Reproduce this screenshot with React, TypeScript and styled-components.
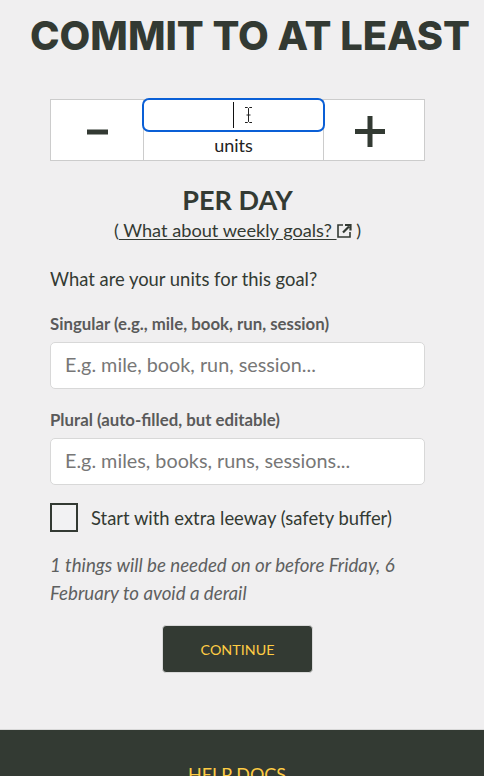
import React from 'react';
import styled, { createGlobalStyle } from 'styled-components';

const bodyFont = `"Lato", "Open Sans", "Liberation Sans", sans-serif`;

const GlobalStyle = createGlobalStyle`
  html, body {
    margin: 0;
    padding: 0;
    height: 776px;
    overflow: hidden;
    background: #f0eff0;
    color: #333a33;
    font-family: ${bodyFont};
  }
  * { box-sizing: border-box; }
`;

const Heading = styled.h1`
  margin: 0;
  padding: 13px 0 0 30px;
  height: 99px;
  font-family: "Inter", "Liberation Sans", sans-serif;
  font-size: 39.8px;
  line-height: 46px;
  font-weight: 800;
  white-space: nowrap;
  color: #333a33;
`;

const Form = styled.div`
  width: 375px;
  margin-left: 50px;
`;

const Stepper = styled.div`
  display: grid;
  grid-template-columns: 92px 181px 1fr;
  height: 62px;
  background: #fff;
  border: 1px solid #ccc;
`;

const MinusButton = styled.div`
  display: flex;
  align-items: center;
  justify-content: center;
  padding-top: 3px;
`;

const PlusButton = styled.div`
  display: flex;
  align-items: center;
  justify-content: center;
  padding: 2px 8px 0 0;
`;

const Middle = styled.div`
  position: relative;
  display: flex;
  flex-direction: column;
  border-left: 1px solid #ccc;
  border-right: 1px solid #ccc;
`;

const ValueBox = styled.div`
  position: relative;
  height: 34px;
  margin: -2px -2px 0 -2px;
  background: #fff;
  border: 2px solid #0a5fd6;
  border-radius: 7px;
`;

const Caret = styled.span`
  position: absolute;
  left: 89px;
  top: 2px;
  width: 1px;
  height: 26px;
  background: #111;
`;

const Pointer = styled.svg`
  position: absolute;
  left: 100px;
  top: 7px;
`;

const UnitText = styled.div`
  flex: 1;
  text-align: center;
  font-size: 18px;
  line-height: 26px;
  color: #222;
`;

const PerDay = styled.div`
  margin-top: 21px;
  text-align: center;
  font-size: 27px;
  line-height: 36px;
  font-weight: 700;
`;

const WeeklyLine = styled.div`
  text-align: center;
  font-size: 18.2px;
  line-height: 24px;
`;

const WeeklyLink = styled.a`
  color: #333a33;
  text-decoration: underline;
  text-underline-offset: 2px;
`;

const Question = styled.p`
  margin: 24px 0 0;
  font-size: 18.4px;
  line-height: 26px;
`;

const FieldLabel = styled.label`
  display: block;
  font-size: 16.8px;
  line-height: 20px;
  font-weight: 700;
  color: #5a5a5a;
`;

const FirstLabel = styled(FieldLabel)`
  margin-top: 22px;
`;

const NextLabel = styled(FieldLabel)`
  margin-top: 21px;
`;

const TextField = styled.input`
  display: block;
  width: 100%;
  height: 47px;
  margin-top: 8px;
  padding: 0 15px 3px 14px;
  background: #fff;
  border: 1px solid #d8d8d8;
  border-radius: 5px;
  font-family: ${bodyFont};
  font-size: 19.8px;
  color: #333;
  &::placeholder {
    color: #777;
    opacity: 1;
  }
`;

const CheckRow = styled.div`
  display: flex;
  align-items: center;
  gap: 13px;
  margin-top: 18px;
  height: 29px;
  font-size: 18.4px;
`;

const CheckBox = styled.span`
  width: 28px;
  height: 29px;
  border: 2px solid #333a33;
  background: #f2f2f3;
`;

const Note = styled.p`
  margin: 19px 0 0;
  font-size: 18.7px;
  line-height: 28px;
  font-style: italic;
  color: #5e6060;
`;

const ContinueButton = styled.button`
  display: block;
  width: 151px;
  height: 48px;
  margin: 18px 0 0 112px;
  background: #333a33;
  border: 1px solid #d8d8d8;
  border-radius: 4px;
  color: #ffcc44;
  font-family: ${bodyFont};
  font-size: 14.3px;
  text-transform: uppercase;
`;

const Footer = styled.footer`
  margin-top: 56px;
  height: 60px;
  background: #333a33;
  border-top: 1px solid #d8d8d8;
  text-align: center;
  padding-top: 33px;
  padding-right: 10px;
  color: #ffcc44;
  font-size: 18px;
  line-height: 22px;
`;

const MinusIcon = () => (
  <svg width="21" height="6" viewBox="0 0 21 6">
    <rect width="21" height="5" y="0.5" fill="#333a33" />
  </svg>
);

const PlusIcon = () => (
  <svg width="30" height="31" viewBox="0 0 30 31">
    <path d="M0 15.500h30M15 0v31" stroke="#333a33" strokeWidth="5" fill="none" />
  </svg>
);

const ExternalIcon = () => (
  <svg width="15" height="15" viewBox="0 0 15 15" style={{ verticalAlign: '-1px' }}>
    <path d="M6 2H1v12h12V9" stroke="#333a33" strokeWidth="1.6" fill="none" />
    <path d="M6 9.500 12 3.500M8 2h5.500v5.500" stroke="#333a33" strokeWidth="2.2" fill="none" />
  </svg>
);

const IBeam = () => (
  <Pointer width="9" height="16" viewBox="0 0 9 16">
    <path d="M1 .5h2.500l1 1 1-1H8M4.500 1.500v13M1 15.500h2.500l1-1 1 1H8M2.500 8h4" stroke="#222" strokeWidth="1" fill="none" />
  </Pointer>
);

export default function App() {
  return (
    <>
      <GlobalStyle />
      <Heading>COMMIT TO AT LEAST</Heading>
      <Form>
        <Stepper>
          <MinusButton>
            <MinusIcon />
          </MinusButton>
          <Middle>
            <ValueBox>
              <Caret />
              <IBeam />
            </ValueBox>
            <UnitText>units</UnitText>
          </Middle>
          <PlusButton>
            <PlusIcon />
          </PlusButton>
        </Stepper>
        <PerDay>PER DAY</PerDay>
        <WeeklyLine>
          (<WeeklyLink href="#"> What about weekly goals? <ExternalIcon /></WeeklyLink> )
        </WeeklyLine>
        <Question>What are your units for this goal?</Question>
        <FirstLabel>Singular (e.g., mile, book, run, session)</FirstLabel>
        <TextField placeholder="E.g. mile, book, run, session..." />
        <NextLabel>Plural (auto-filled, but editable)</NextLabel>
        <TextField placeholder="E.g. miles, books, runs, sessions..." />
        <CheckRow>
          <CheckBox />
          Start with extra leeway (safety buffer)
        </CheckRow>
        <Note>1 things will be needed on or before Friday, 6 February to avoid a derail</Note>
        <ContinueButton>Continue</ContinueButton>
      </Form>
      <Footer>HELP DOCS</Footer>
    </>
  );
}
